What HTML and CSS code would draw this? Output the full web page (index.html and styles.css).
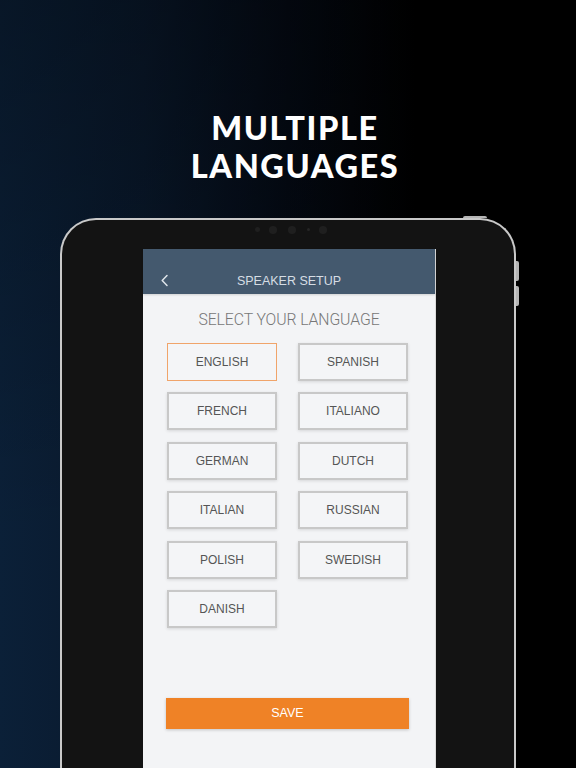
FILE: index.html
```html
<!DOCTYPE html>
<html>
<head>
<meta charset="utf-8">
<link rel="stylesheet" href="styles.css">
</head>
<body>
<div class="page">
  <h1 class="headline">MULTIPLE<br>LANGUAGES</h1>
  <div class="tablet">
    <div class="btn-side btn-top"></div>
    <div class="btn-side btn-vol1"></div>
    <div class="btn-side btn-vol2"></div>
    <div class="cams">
      <span class="dot sm"></span>
      <span class="dot lg"></span>
      <span class="dot lg"></span>
      <span class="dot xs"></span>
      <span class="dot lg"></span>
    </div>
    <div class="screen">
      <div class="appbar">
        <svg class="back" width="9" height="13" viewBox="0 0 9 13"><path d="M7 1.5 L2.2 6.5 L7 11.5" fill="none" stroke="#dfe5ea" stroke-width="1.5" stroke-linecap="round" stroke-linejoin="round"/></svg>
        <span class="appbar-title">SPEAKER SETUP</span>
      </div>
      <div class="content">
        <div class="subtitle">SELECT YOUR LANGUAGE</div>
        <div class="grid">
          <div class="lang selected">ENGLISH</div>
          <div class="lang">SPANISH</div>
          <div class="lang">FRENCH</div>
          <div class="lang">ITALIANO</div>
          <div class="lang">GERMAN</div>
          <div class="lang">DUTCH</div>
          <div class="lang">ITALIAN</div>
          <div class="lang">RUSSIAN</div>
          <div class="lang">POLISH</div>
          <div class="lang">SWEDISH</div>
          <div class="lang">DANISH</div>
        </div>
        <div class="save">SAVE</div>
      </div>
    </div>
  </div>
</div>
</body>
</html>
```

FILE: styles.css
```css
html, body {
  margin: 0;
  padding: 0;
}
body {
  width: 576px;
  height: 768px;
  overflow: hidden;
  background: #000;
}
.page {
  width: 576px;
  height: 768px;
  display: flex;
  flex-direction: column;
  align-items: center;
  background:
    linear-gradient(180deg, rgba(0,0,0,0.3) 0%, rgba(0,0,0,0) 70%),
    linear-gradient(90deg, #0b2038 0%, #09182b 25%, #040a14 50%, #000 72%, #000 100%);
  overflow: hidden;
}
.headline {
  margin: 109px 0 0 14px;
  font-family: "Lato", "Open Sans", sans-serif;
  font-weight: 900;
  font-size: 32.5px;
  line-height: 38px;
  letter-spacing: 1.6px;
  color: #fff;
  text-align: center;
}
.tablet {
  position: relative;
  margin-top: 33px;
  width: 452px;
  height: 560px;
  flex: none;
  border: 2px solid #c9c9c9;
  border-bottom: none;
  border-radius: 36px 36px 0 0;
  background: #131313;
  box-sizing: content-box;
}
.btn-side {
  position: absolute;
  right: -5px;
  width: 3px;
  background: #b5b5b5;
  border-radius: 0 2px 2px 0;
}
.btn-top { top: -4px; right: 27px; width: 24px; height: 2px; border-radius: 2px 2px 0 0; }
.btn-vol1 { top: 41px; height: 20px; }
.btn-vol2 { top: 66px; height: 20px; }
.cams {
  height: 29px;
  display: flex;
  justify-content: center;
  align-items: center;
  gap: 6px;
  padding-left: 10px;
  box-sizing: border-box;
  padding-bottom: 10px;
}
.dot {
  display: block;
  border-radius: 50%;
  background: #1f1f1f;
}
.dot.sm { width: 5px; height: 5px; margin-right: 3px; }
.dot.lg { width: 8px; height: 8px; margin-right: 5px; }
.dot.xs { width: 3px; height: 3px; margin-right: 3px; background: #262626; }
.screen {
  margin-left: 81px;
  width: 292px;
  height: 531px;
  background: #f3f4f6;
  border-right: 1px solid #dcdcdc;
  display: flex;
  flex-direction: column;
}
.appbar {
  position: relative;
  height: 45px;
  flex: none;
  background: #44596e;
  display: flex;
  justify-content: center;
  align-items: flex-end;
  padding-bottom: 6px;
  box-sizing: border-box;
  box-shadow: 0 1px 2px rgba(0,0,0,0.15);
}
.back {
  position: absolute;
  left: 17px;
  top: 25px;
}
.appbar-title {
  font-family: "Liberation Sans", Arial, sans-serif;
  font-size: 12.5px;
  color: #d6dde4;
}
.content {
  display: flex;
  flex-direction: column;
  padding: 0 24px;
}
.subtitle {
  margin-top: 16px;
  text-align: center;
  font-family: "Roboto", "Liberation Sans", sans-serif;
  font-weight: 300;
  font-size: 15.8px;
  color: #777;
  line-height: 20px;
  letter-spacing: -0.1px;
}
.grid {
  margin-top: 13px;
  display: grid;
  grid-template-columns: 110px 110px;
  column-gap: 21px;
  row-gap: 11.4px;
}
.lang {
  height: 38px;
  box-sizing: border-box;
  border: 2px solid #c8c8c8;
  box-shadow: 0 1px 3px rgba(0,0,0,0.12);
  display: flex;
  align-items: center;
  justify-content: center;
  font-family: "Liberation Sans", Arial, sans-serif;
  font-size: 12px;
  color: #555;
  background: #f4f5f7;
}
.lang.selected {
  border: 1.5px solid #f0a46a;
  box-shadow: none;
}
.save {
  margin-top: 70px;
  margin-left: -1px;
  width: 243px;
  height: 31px;
  background: #ef8226;
  color: #fff;
  font-family: "Liberation Sans", Arial, sans-serif;
  font-size: 12.5px;
  display: flex;
  align-items: center;
  justify-content: center;
  box-shadow: 0 1px 3px rgba(0,0,0,0.2);
}
```
